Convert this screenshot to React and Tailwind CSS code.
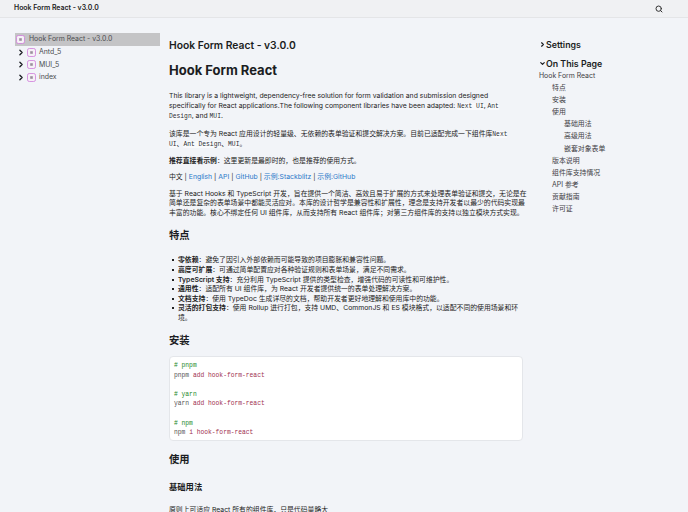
import React from 'react'
import { Search, ChevronRight, ChevronDown } from 'lucide-react'

const ModuleIcon = () => (
  <svg width="9" height="9" viewBox="0 0 9 9" className="shrink-0">
    <rect x="0.5" y="0.5" width="8" height="8" rx="1.8" fill="#f6f0f7" stroke="#cf7bda" strokeWidth="0.8" />
    <rect x="3.2" y="3.2" width="2.6" height="2.6" fill="#9a8f9c" />
  </svg>
)

const NavItem = ({ label, active }) => (
  <div className={active ? 'flex items-center h-[13px] pl-[1px] gap-[4px] bg-[#c4c4c6]' : 'flex items-center h-[12.5px] pl-[1px]'}>
    {!active && <ChevronRight size={9} strokeWidth={3.5} className="text-[#1b1d22] mr-[1px] w-[10px]" />}
    <ModuleIcon />
    <span className={active ? 'text-[#4b4c50]' : 'text-[#4b4c50] ml-[3px]'}>{label}</span>
  </div>
)

const Code = ({ children }) => (
  <code className="rounded-[1px] bg-[#f9fafc] font-['Liberation_Mono','Noto_Sans_CJK_SC',monospace] text-[6.3px] text-[#2b2d33]">{children}</code>
)

const Link = ({ children }) => <span className="text-[#2a78c8]">{children}</span>

const Bullet = ({ title, children }) => (
  <li className="flex">
    <span className="ml-[3px] mr-[4px] mt-[4px] h-[2px] w-[2px] shrink-0 bg-[#222]" />
    <span>
      <b className="font-semibold">{title}</b>{children}
    </span>
  </li>
)

const TocItem = ({ label, level }) => {
  const indent = level === 0 ? 'pl-0' : level === 1 ? 'pl-[13px]' : 'pl-[25px]'
  return <div className={'h-[12.1px] leading-[12px] ' + indent}>{label}</div>
}

const App = () => {
  return (
    <div className="h-[512px] w-[688px] overflow-hidden bg-[#f2f4f8] text-[#222] font-['Inter','Noto_Sans_CJK_SC',sans-serif] text-[6.85px]">
      <header className="flex h-[18px] items-center justify-between border-b border-[#e4e5e7] bg-[#f0f1f3] pl-[14px] pr-[25px]">
        <span className="text-[6.9px] font-semibold text-[#222]">Hook Form React - v3.0.0</span>
        <Search size={8} strokeWidth={3} className="text-[#333] mt-[1px]" />
      </header>

      <div className="flex">
        <aside className="w-[160px] shrink-0 pl-[15px] pt-[15px] text-[6.9px]">
          <NavItem label="Hook Form React - v3.0.0" active />
          <NavItem label="Antd_5" />
          <NavItem label="MUI_5" />
          <NavItem label="index" />
        </aside>

        <main className="ml-[9px] w-[354px] shrink-0 pt-[20px] leading-[9.55px]">
          <h2 className="text-[10.3px] font-semibold leading-[14px] text-[#1b1d22]">Hook Form React - v3.0.0</h2>
          <h1 className="mt-[10px] text-[13px] font-bold leading-[17px] text-[#1b1d22]">Hook Form React</h1>
          <p className="mt-[12px]">
            This library is a lightweight, dependency-free solution for form validation and submission designed specifically for React applications.The following component libraries have been adapted: <Code>Next UI</Code>, <Code>Ant Design</Code>, and <Code>MUI</Code>.
          </p>
          <p className="mt-[7px]">
            该库是一个专为 React 应用设计的轻量级、无依赖的表单验证和提交解决方案。目前已适配完成一下组件库<Code>Next UI</Code>、<Code>Ant Design</Code>、<Code>MUI</Code>。
          </p>
          <p className="mt-[6px]"><b className="font-semibold">推荐直接看示例</b>：这里更新是最即时的，也是推荐的使用方式。</p>
          <p className="mt-[7px]">
            中文 | <Link>English</Link> | <Link>API</Link> | <Link>GitHub</Link> | <Link>示例:Stackblitz</Link> | <Link>示例:GitHub</Link>
          </p>
          <p className="mt-[7px] whitespace-nowrap">
            基于 React Hooks 和 TypeScript 开发，旨在提供一个简洁、高效且易于扩展的方式来处理表单验证和提交，无论是在<br />
            简单还是复杂的表单场景中都能灵活应对。本库的设计哲学是兼容性和扩展性，理念是支持开发者以最少的代码实现最<br />
            丰富的功能。核心不绑定任何 UI 组件库，从而支持所有 React 组件库；对第三方组件库的支持以独立模块方式实现。
          </p>
          <h2 className="mt-[11px] text-[10.3px] font-semibold leading-[14px] text-[#1b1d22]">特点</h2>
          <ul className="mt-[13px]">
            <Bullet title="零依赖">：避免了因引入外部依赖而可能导致的项目膨胀和兼容性问题。</Bullet>
            <Bullet title="高度可扩展">：可通过简单配置应对各种验证规则和表单场景，满足不同需求。</Bullet>
            <Bullet title="TypeScript 支持">：充分利用 TypeScript 提供的类型检查，增强代码的可读性和可维护性。</Bullet>
            <Bullet title="通用性">：适配所有 UI 组件库，为 React 开发者提供统一的表单处理解决方案。</Bullet>
            <Bullet title="文档支持">：使用 TypeDoc 生成详尽的文档，帮助开发者更好地理解和使用库中的功能。</Bullet>
            <Bullet title="灵活的打包支持">：使用 Rollup 进行打包，支持 UMD、CommonJS 和 ES 模块格式，以适配不同的使用场景和环境。</Bullet>
          </ul>
          <h2 className="mt-[11px] text-[10.3px] font-semibold leading-[14px] text-[#1b1d22]">安装</h2>
          <pre className="mt-[9px] rounded-[4px] border border-[#e4e6ea] bg-white px-[4px] pb-[2px] pt-[4px] font-['Liberation_Mono',monospace] text-[6.3px] leading-[9.55px]"><span className="text-[#1d8a2a]"># pnpm</span>{'\n'}<span className="text-[#555]">pnpm </span><span className="text-[#a0304f]">add hook-form-react</span>{'\n\n'}<span className="text-[#1d8a2a]"># yarn</span>{'\n'}<span className="text-[#555]">yarn </span><span className="text-[#a0304f]">add hook-form-react</span>{'\n\n'}<span className="text-[#1d8a2a]"># npm</span>{'\n'}<span className="text-[#555]">npm </span><span className="text-[#a0304f]">i hook-form-react</span></pre>
          <h2 className="mt-[11px] text-[10.3px] font-semibold leading-[14px] text-[#1b1d22]">使用</h2>
          <h3 className="mt-[16px] text-[8.3px] font-semibold leading-[11px] text-[#1b1d22]">基础用法</h3>
          <p className="mt-[12px]">原则上可适应 React 所有的组件库，只是代码量略大</p>
        </main>

        <aside className="ml-[16px] flex-1 pt-[21px] text-[6.9px] text-[#3f4045]">
          <div className="flex items-center text-[8.8px] font-semibold leading-[12px] text-[#1b1d22]">
            <ChevronRight size={7} strokeWidth={4} className="w-[7px] -mt-[2px]" />
            <span>Settings</span>
          </div>
          <div className="mt-[7px] flex items-center text-[8.8px] font-semibold leading-[12px] text-[#1b1d22]">
            <ChevronDown size={7} strokeWidth={4} className="w-[7px] -mt-[2px]" />
            <span>On This Page</span>
          </div>
          <div className="mt-[0px]">
            <TocItem label="Hook Form React" level={0} />
            <TocItem label="特点" level={1} />
            <TocItem label="安装" level={1} />
            <TocItem label="使用" level={1} />
            <TocItem label="基础用法" level={2} />
            <TocItem label="高级用法" level={2} />
            <TocItem label="嵌套对象表单" level={2} />
            <TocItem label="版本说明" level={1} />
            <TocItem label="组件库支持情况" level={1} />
            <TocItem label="API 参考" level={1} />
            <TocItem label="贡献指南" level={1} />
            <TocItem label="许可证" level={1} />
          </div>
        </aside>
      </div>
    </div>
  )
}

export default App
